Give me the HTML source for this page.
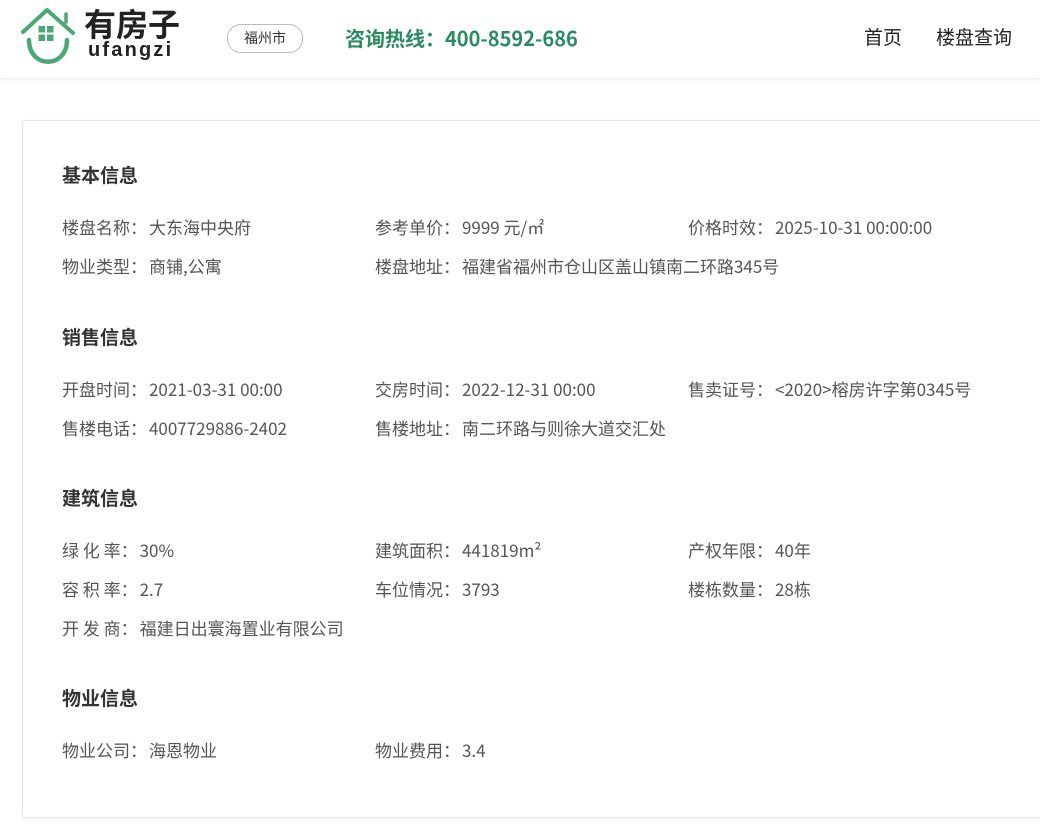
<!DOCTYPE html>
<html><head><meta charset="utf-8"><style>
body{margin:0;background:#fff;font-family:"Noto Sans CJK SC","Liberation Sans",sans-serif;width:1040px;height:836px;overflow:hidden;position:relative}
.hdr{position:absolute;left:0;top:0;width:1040px;height:78px;background:#fff;border-bottom:1px solid #eee;box-shadow:0 2px 4px rgba(0,0,0,.04)}
.abs{position:absolute;white-space:nowrap}
.card{position:absolute;left:22px;top:120px;width:1030px;height:696px;border:1px solid #e6e6e6;border-radius:4px;box-shadow:0 1px 4px rgba(0,0,0,.06)}
.h{position:absolute;left:62px;font-size:19px;font-weight:bold;color:#333;line-height:1}
.r{position:absolute;font-size:17px;color:#555;line-height:1;white-space:nowrap}
.r b{font-weight:normal;margin-right:2px}
</style></head><body>
<div class="hdr">
<svg class="abs" style="left:0;top:0" width="80" height="70" viewBox="0 0 80 70">
<path d="M23 32 L47 10 L73 33" fill="none" stroke="#4aa876" stroke-width="4" stroke-linecap="round" stroke-linejoin="round"/>
<path d="M66 22 V14" stroke="#4aa876" stroke-width="3.5" stroke-linecap="round"/>
<path d="M29 40 C29 69 67 69 67 40" fill="none" stroke="#4aa876" stroke-width="4.5" stroke-linecap="round"/>
<rect x="38.5" y="26" width="6.5" height="6.5" fill="#4aa876"/><rect x="47" y="26" width="6.5" height="6.5" fill="#4aa876"/>
<rect x="38.5" y="34.5" width="6.5" height="6.5" fill="#4aa876"/><rect x="47" y="34.5" width="6.5" height="6.5" fill="#4aa876"/>
</svg>
<div class="abs" style="left:84px;top:6px;font-size:32px;font-weight:bold;color:#222;line-height:1.1">有房子</div>
<div class="abs" style="left:88px;top:40px;font-family:'Liberation Sans',sans-serif;font-size:20px;font-weight:bold;color:#222;letter-spacing:2.2px;line-height:1">ufangzi</div>
<div class="abs" style="left:227px;top:24px;width:74px;height:27px;border:1px solid #bbb;border-radius:14px;font-size:14px;color:#333;text-align:center;line-height:27px">福州市</div>
<div class="abs" style="left:345px;top:27px;font-size:20px;font-weight:bold;color:#2a8a60;line-height:1.1">咨询热线：400-8592-686</div>
<div class="abs" style="left:864px;top:27px;font-size:19px;color:#222;line-height:1.1">首页</div>
<div class="abs" style="left:936px;top:27px;font-size:19px;color:#222;line-height:1.1">楼盘查询</div>
</div>
<div class="card"></div>
<div class="h" style="top:165px">基本信息</div>
<div class="r" style="left:62px;top:218px"><b>楼盘名称：</b>大东海中央府</div>
<div class="r" style="left:375px;top:218px"><b>参考单价：</b>9999 元/㎡</div>
<div class="r" style="left:688px;top:218px"><b>价格时效：</b>2025-10-31 00:00:00</div>
<div class="r" style="left:62px;top:257px"><b>物业类型：</b>商铺,公寓</div>
<div class="r" style="left:375px;top:257px"><b>楼盘地址：</b>福建省福州市仓山区盖山镇南二环路345号</div>
<div class="h" style="top:327px">销售信息</div>
<div class="r" style="left:62px;top:380px"><b>开盘时间：</b>2021-03-31 00:00</div>
<div class="r" style="left:375px;top:380px"><b>交房时间：</b>2022-12-31 00:00</div>
<div class="r" style="left:688px;top:380px"><b>售卖证号：</b>&lt;2020&gt;榕房许字第0345号</div>
<div class="r" style="left:62px;top:419px"><b>售楼电话：</b>4007729886-2402</div>
<div class="r" style="left:375px;top:419px"><b>售楼地址：</b>南二环路与则徐大道交汇处</div>
<div class="h" style="top:488px">建筑信息</div>
<div class="r" style="left:62px;top:541px"><b>绿 化 率：</b>30%</div>
<div class="r" style="left:375px;top:541px"><b>建筑面积：</b>441819m²</div>
<div class="r" style="left:688px;top:541px"><b>产权年限：</b>40年</div>
<div class="r" style="left:62px;top:580px"><b>容 积 率：</b>2.7</div>
<div class="r" style="left:375px;top:580px"><b>车位情况：</b>3793</div>
<div class="r" style="left:688px;top:580px"><b>楼栋数量：</b>28栋</div>
<div class="r" style="left:62px;top:619px"><b>开 发 商：</b>福建日出寰海置业有限公司</div>
<div class="h" style="top:688px">物业信息</div>
<div class="r" style="left:62px;top:741px"><b>物业公司：</b>海恩物业</div>
<div class="r" style="left:375px;top:741px"><b>物业费用：</b>3.4</div>
</body></html>
